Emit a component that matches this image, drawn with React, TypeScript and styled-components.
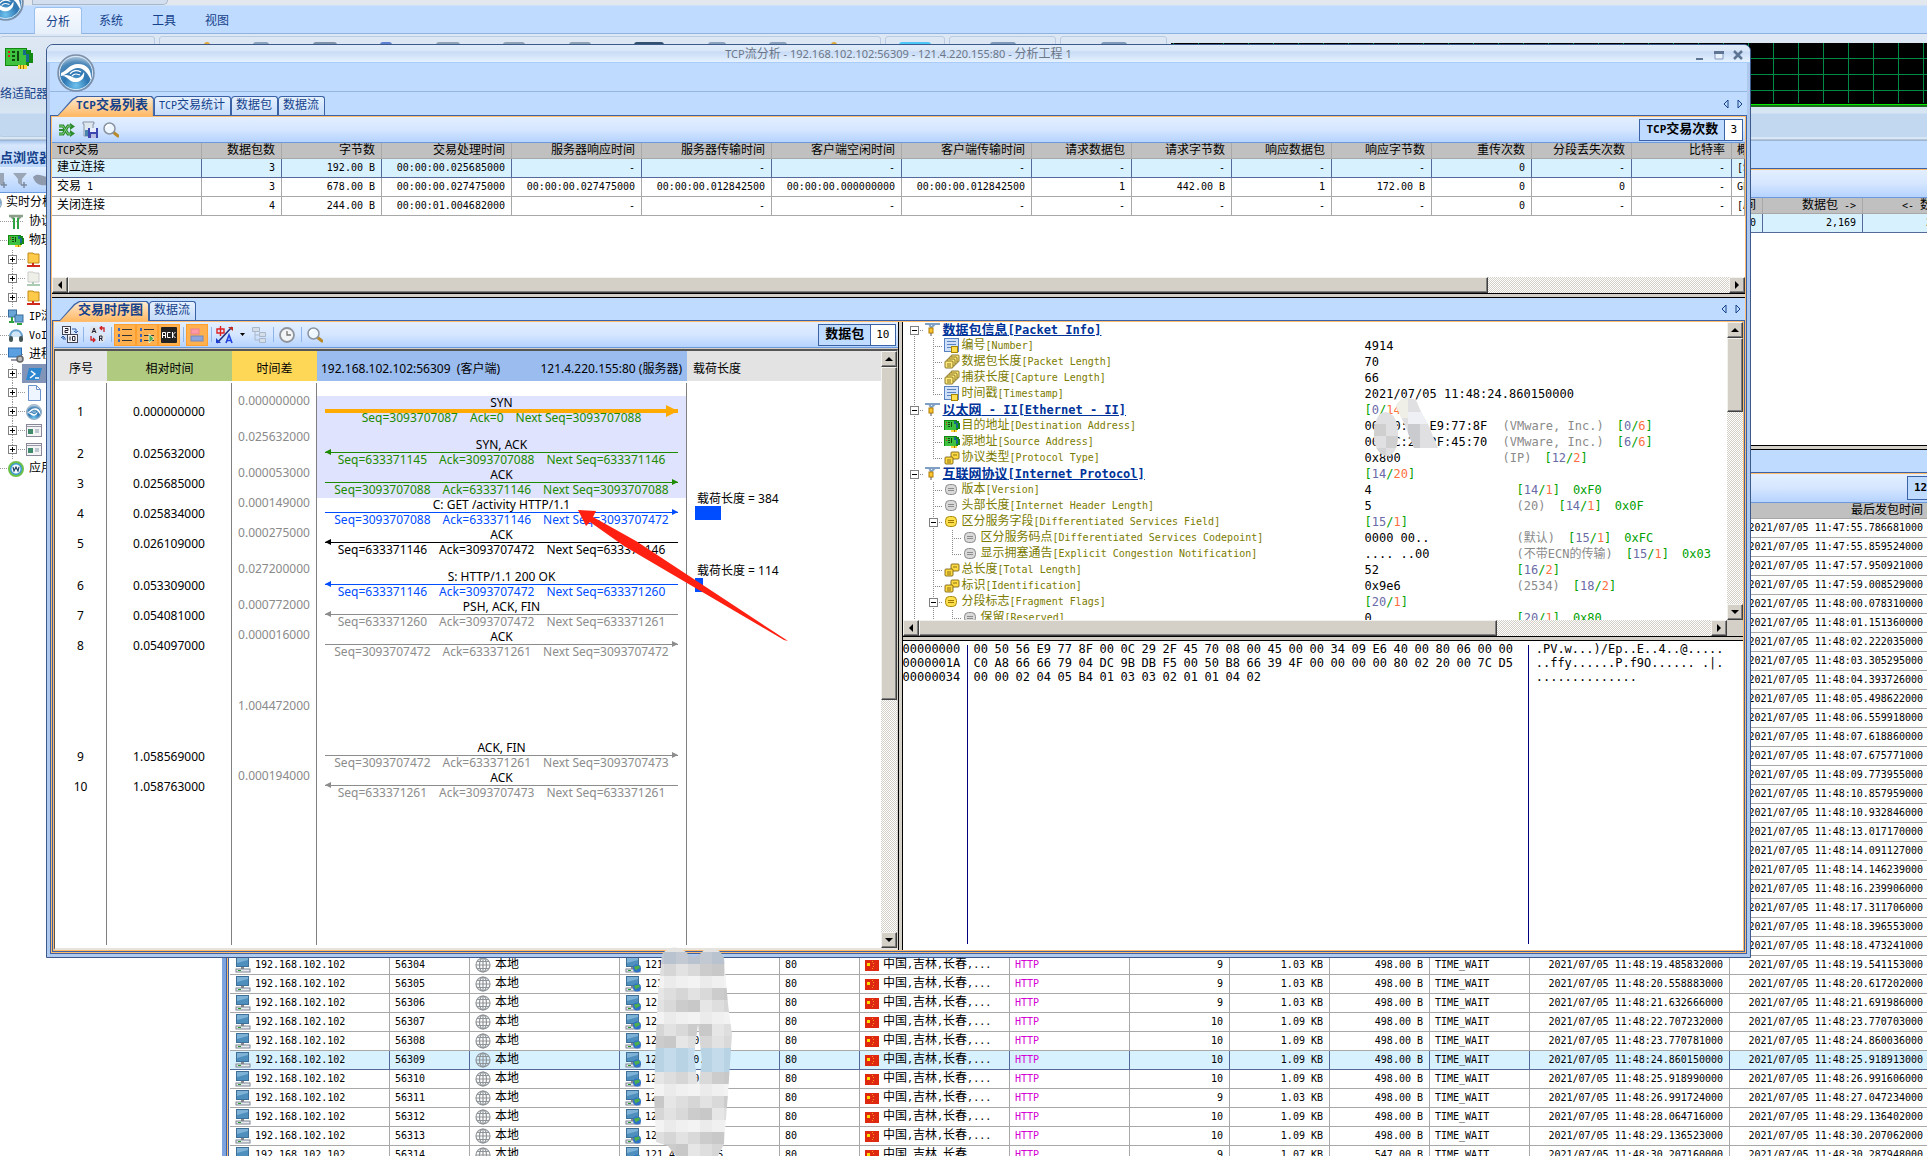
import React from 'react';
import styled, { createGlobalStyle, css } from 'styled-components';

const MONO = '"DejaVu Sans Mono", "Noto Sans CJK SC", monospace';
const SANS = '"Noto Sans", "Noto Sans CJK SC", sans-serif';
const NAVY = '#15428b';
const FRAME = '#3a62a5';
const SKY = '#bfdbff';
const ORANGE = '#ffbb6e';

const Global = createGlobalStyle`
  *, *::before, *::after { box-sizing: border-box; }
  html, body { margin: 0; height: 100%; }
  #root { height: 100%; }
  body { font-family: ${MONO}; font-size: 10px; color: #000; background: #fff; overflow: hidden; }
  button { font: inherit; color: inherit; margin: 0; padding: 0; border: 0; background: none; }
  svg { display: block; flex: none; }
  table { border-collapse: separate; border-spacing: 0; table-layout: fixed; }
`;

/* ---------- text ---------- */

const Han = styled.span<{ $size: number }>`
  font-family: "Noto Sans CJK SC", sans-serif;
  font-size: ${p => p.$size}px;
  line-height: 1;
`;

function Txt({ children, size = 12 }: { children: string; size?: number }) {
  return (
    <>
      {children.split(/([\u2e80-\u9fff]+)/).map((part, i) =>
        i % 2 ? <Han key={i} $size={size}>{part}</Han> : part
      )}
    </>
  );
}

/* ---------- icons ---------- */

const Orb = ({ size }: { size: number }) => (
  <svg width={size} height={size} viewBox="0 0 38 38">
    <defs>
      <radialGradient id="orb" cx="50%" cy="85%" r="85%">
        <stop offset="0" stopColor="#6fc3ee" />
        <stop offset="0.4" stopColor="#2f78b4" />
        <stop offset="0.75" stopColor="#4d88b8" />
        <stop offset="1" stopColor="#c4d6e6" />
      </radialGradient>
    </defs>
    <circle cx="19" cy="19" r="18" fill="url(#orb)" stroke="#7d8ea6" strokeWidth="1.5" />
    <circle cx="19" cy="19" r="16.6" fill="none" stroke="#dbe9f6" strokeWidth="1" />
    <path d="M4 19C10 17 12 10 21 10C30 10 35 16 34 26C31 20 28 15 22 14C15 13 12 20 4 22z" fill="#fff" />
    <path d="M5 22C10 21 12 29 20 28C26 27 28 22 27 18C25 22 22 25 18 24C14 23 12 19 5 22z" fill="#fff" />
    <path d="M13 20c3-4 7-4 11-2M15 22c3-3 5-2 8-1" fill="none" stroke="#fff" strokeWidth="1.2" />
  </svg>
);

const Nic = ({ w = 16 }: { w?: number }) => (
  <svg width={w} height={(w * 3) / 4} viewBox="0 0 28 21" shapeRendering="crispEdges">
    <path d="M0 0h22v2h4v3h2v10h-4v3h-2v3h-8v-3H0z" fill="#128a12" />
    <path d="M1 1h20v16H1z" fill="#3fc23f" />
    <path d="M3 3h2v2H3zM3 7h2v2H3z" fill="#e02020" />
    <path d="M7 3h3v2H7zM7 7h3v2H7zM7 11h3v2H7zM12 3h2v10h-2z" fill="#114a11" />
    <path d="M18 2h3v5h-3zM21 6h3v8h-3z" fill="#176a8a" />
    <path d="M13 17h9v4h-9z" fill="#ffd93b" />
    <path d="M15 17h1v4h-1zM18 17h1v4h-1z" fill="#9a7a00" />
  </svg>
);

const Shuffle = () => (
  <svg width="16" height="14" viewBox="0 0 16 14">
    <path d="M0 3h4l5 8h3M0 11h4l5-8h3" fill="none" stroke="#2d8a2d" strokeWidth="3" />
    <path d="M11 0l5 3.5L11 7zM11 7l5 3.5-5 3.5z" fill="#2d8a2d" />
    <path d="M0 3h4l5 8h3M0 11h4l5-8h3" fill="none" stroke="#7fd07f" strokeWidth="1" />
    <path d="M0 7h5" stroke="#2d8a2d" strokeWidth="2" />
  </svg>
);
const SaveAs = () => (
  <svg width="17" height="17" viewBox="0 0 17 17">
    <path d="M2 1h11v2h-1v12H3V3H2z" fill="#dfe8ef" stroke="#8795a5" />
    <path d="M4 9h5v6H4z" fill="#4784b0" />
    <path d="M7 7h10v10H7z" fill="#3b46b0" />
    <path d="M9 7h6v4H9z" fill="#e8ecff" />
    <path d="M10 13h5v4h-5z" fill="#b8bde0" />
  </svg>
);
const Lens = () => (
  <svg width="16" height="16" viewBox="0 0 16 16">
    <path d="M10 10l5 4" stroke="#b98a2a" strokeWidth="3" strokeLinecap="round" />
    <circle cx="6.5" cy="6.5" r="5.5" fill="#eef7ff" stroke="#8a93a0" strokeWidth="1.5" />
    <path d="M3 6c0-2 2-3 4-3" fill="none" stroke="#fff" strokeWidth="1.5" />
  </svg>
);
const Digits = () => (
  <svg width="17" height="17" viewBox="0 0 17 17">
    <rect x="1.500" y="0.500" width="8" height="8" fill="#f5f7fa" stroke="#445" />
    <path d="M4 2.500h3v2H4v2h3" fill="none" stroke="#223" />
    <rect x="6.500" y="8.500" width="10" height="8" fill="#f5f7fa" stroke="#445" />
    <path d="M9 10.500v4M11.500 10.500h2.500v4h-2.500z" fill="none" stroke="#223" />
    <path d="M11 3h4v3M13 5l2 2 2-2M5 13H2v-3M0 12l2-2 2 2" fill="none" stroke="#2c5ba8" />
  </svg>
);
const SwapAR = () => (
  <svg width="17" height="17" viewBox="0 0 17 17">
    <circle cx="5" cy="4.500" r="4.500" fill="#dfe3ea" />
    <circle cx="12" cy="12" r="4.500" fill="#dfe3ea" />
    <path d="M3 7l2-5 2 5M4 5.500h2M10.500 15v-5h2.500v2.500h-2.500M12 12.500l1.500 2.500" fill="none" stroke="#223" />
    <path d="M11 2h4v4M13 0l-2 2 2 2M6 14H2v-4M4 12l2 2-2 2" fill="none" stroke="#d02020" strokeWidth="1.300" />
  </svg>
);
const Bullets = ({ play }: { play?: boolean }) => (
  <svg width="16" height="16" viewBox="0 0 16 16">
    <path d="M5 2.500h10M5 8.500h10M5 13.500h10" stroke="#333" strokeWidth="1" />
    <path d="M1 1h2v3H1zM1 7h2v3H1zM1 12h2v3H1z" fill="#3f66b8" />
    {play && <path d="M10 7l5 4.500-5 4.500z" fill="#4fb04f" stroke="#fff" strokeWidth="0.700" />}
  </svg>
);
const AckIcon = () => (
  <svg width="16" height="16" viewBox="0 0 16 16">
    <rect width="16" height="16" rx="1" fill="#222" />
    <path d="M1.500 11V5.500h3V11M1.500 8.500h3M9.500 5.500h-3v5h3M11.500 5v6M14.500 5l-3 3 3 3" fill="none" stroke="#fff" />
  </svg>
);
const Blocks = () => (
  <svg width="14" height="14" viewBox="0 0 14 14">
    <rect x="1" y="1" width="8" height="5" fill="#ff9aa5" stroke="#e98090" />
    <rect x="1" y="8" width="12" height="5" fill="#8fa4d8" stroke="#7288c0" />
  </svg>
);
const Language = () => (
  <svg width="18" height="18" viewBox="0 0 18 18">
    <path d="M1 3h7v4H1zM4.500 0v10" fill="none" stroke="#e02020" strokeWidth="1.400" />
    <path d="M1 17L16 1" stroke="#203080" strokeWidth="1.600" />
    <path d="M12 1h5v4z" fill="#c03020" />
    <path d="M0 12v5h5z" fill="#2040d0" />
    <path d="M10 17l3-8 3 8M11 14.500h4" fill="none" stroke="#2040e0" strokeWidth="1.600" />
  </svg>
);
const GreyTree = () => (
  <svg width="15" height="16" viewBox="0 0 15 16">
    <path d="M3 4v9h6M3 8h6" fill="none" stroke="#a9b7c8" />
    <path d="M0.500 0.500h7v4h-7zM7.500 5.500h6v4h-6zM7.500 11.500h6v4h-6z" fill="#d5dde8" stroke="#a9b7c8" />
  </svg>
);
const Clock = () => (
  <svg width="16" height="16" viewBox="0 0 16 16">
    <circle cx="8" cy="8" r="7" fill="#f3f4f6" stroke="#8f949c" strokeWidth="1.800" />
    <path d="M8 4v4h4" fill="none" stroke="#777" strokeWidth="1.300" />
  </svg>
);
const Tri = ({ dir }: { dir: 'u' | 'd' | 'l' | 'r' }) => (
  <svg width="8" height="8" viewBox="0 0 8 8">
    <path d={{ u: 'M0 6h8L4 2z', d: 'M0 2h8L4 6z', l: 'M6 0v8L2 4z', r: 'M2 0v8l4-4z' }[dir]} />
  </svg>
);
const TabArrow = ({ left }: { left?: boolean }) => (
  <svg width="6" height="10" viewBox="0 0 6 10">
    <path d={left ? 'M5 1v8L1 5z' : 'M1 1v8l4-4z'} fill="none" stroke={NAVY} />
  </svg>
);

type Kind = 'pin' | 'note' | 'stack' | 'card' | 'pair' | 'grey' | 'gold';
function PacketIcon({ kind }: { kind: Kind }) {
  if (kind === 'card') return <Nic w={16} />;
  return (
    <svg width="16" height="16" viewBox="0 0 16 16">
      {kind === 'pin' && (
        <>
          <path d="M0 2h15M4 2l3 5M10 2L7 5" stroke="#7f9fc4" strokeWidth="2" fill="none" />
          <rect x="4" y="6" width="4" height="5" fill="#ffc72e" stroke="#b07a00" />
          <path d="M6 11v3" stroke="#555" />
        </>
      )}
      {kind === 'note' && (
        <>
          <rect x="0.500" y="0.500" width="14" height="13" fill="#cfe0fb" stroke="#5a82c0" />
          <path d="M3 3.500h9M3 6.500h9M3 9.500h4" stroke="#5a82c0" />
          <rect x="7.500" y="8.500" width="6" height="6" fill="#ffdf4f" stroke="#a98600" />
        </>
      )}
      {kind === 'stack' && (
        <g fill="#ffe97a" stroke="#7a6a1a" strokeWidth="0.900">
          <rect x="7" y="1" width="8" height="7" rx="1" />
          <rect x="5" y="3" width="8" height="7" rx="1" />
          <rect x="3" y="5" width="8" height="7" rx="1" />
          <rect x="1" y="7" width="8" height="7" rx="1" />
          <path d="M3 10h4M3 12h4" />
        </g>
      )}
      {kind === 'pair' && (
        <g fill="#ffd93f" stroke="#7a6416" strokeWidth="0.900">
          <rect x="7" y="2" width="8" height="7" rx="1" />
          <rect x="1" y="7" width="8" height="7" rx="1" />
          <path d="M9 5h4M3 10h4M3 12h4" />
        </g>
      )}
      {(kind === 'grey' || kind === 'gold') && (
        <>
          <rect x="1.500" y="2.500" width="11" height="10" rx="4" fill={kind === 'grey' ? '#d9d9d9' : '#ffdf4a'} stroke={kind === 'grey' ? '#8c8c8c' : '#a88a10'} />
          <path d="M4 6.500h6M4 8.500h6" stroke={kind === 'grey' ? '#8c8c8c' : '#a07800'} />
        </>
      )}
    </svg>
  );
}

const Pc = ({ globe }: { globe?: boolean }) => (
  <svg width="16" height="16" viewBox="0 0 16 16">
    <rect x="1.500" y="0.500" width="12" height="9" fill="#4f8fbd" stroke="#3d6f98" />
    <path d="M2 6l11-3V1H2z" fill="#7db2d6" />
    <path d="M6 10h3v2H6z" fill="#888" />
    <rect x="1" y="12" width="14" height="3" fill="#e8ecf2" stroke="#7c8490" />
    <path d="M3 13h3v1H3z" fill="#2c9a2c" />
    {globe && (
      <>
        <circle cx="12" cy="11.500" r="4" fill="#2f70c8" />
        <path d="M9 10c2-2 3 0 4-2l2 2c-1 3-3 1-4 4z" fill="#4cae4c" />
      </>
    )}
  </svg>
);
const Globe = () => (
  <svg width="16" height="16" viewBox="0 0 16 16" fill="none" stroke="#8f9498" strokeWidth="1.200">
    <circle cx="8" cy="8" r="7" />
    <ellipse cx="8" cy="8" rx="3.500" ry="7" />
    <path d="M8 1v14M1 8h14M2 4.500h12M2 11.500h12" />
  </svg>
);
const Flag = () => (
  <svg width="14" height="11" viewBox="0 0 14 11">
    <rect width="14" height="11" fill="#de2910" />
    <path d="M2 3h3v3H2z" fill="#ffde00" />
    <path d="M7 1h1v1H7zM8 3h1v1H8zM8 6h1v1H8zM7 8h1v1H7z" fill="#ff9a20" />
  </svg>
);

type Side = 'orb' | 'proto' | 'nic' | 'folder' | 'folderOff' | 'ip' | 'voip' | 'proc' | 'shell' | 'doc' | 'win' | 'web';
function SideIcon({ kind }: { kind: Side }) {
  if (kind === 'orb') return <Orb size={16} />;
  if (kind === 'nic') return <Nic w={16} />;
  return (
    <svg width="16" height="16" viewBox="0 0 16 16">
      {kind === 'proto' && (
        <>
          <path d="M1 2h14M3 2l3 3M13 2l-3 3" stroke="#8aa08a" strokeWidth="2.500" />
          <path d="M5 4h2v11H5zM9 4h2v11H9z" fill="#2fa23f" />
        </>
      )}
      {(kind === 'folder' || kind === 'folderOff') && (
        <g opacity={kind === 'folderOff' ? 0.5 : 1}>
          <path d="M2 1h5l1 1h5v9H2z" fill={kind === 'folder' ? '#ffc94a' : '#dfe0d0'} stroke={kind === 'folder' ? '#c08a1a' : '#999'} />
          <path d="M7 11v3M1 14h13" stroke={kind === 'folder' ? '#d02a1a' : '#5a9a6a'} strokeWidth="2" />
        </g>
      )}
      {kind === 'ip' && (
        <>
          <rect x="0.500" y="1" width="8" height="7" fill="#6aa6d6" stroke="#3b6c9c" />
          <rect x="7" y="6" width="8" height="7" fill="#6aa6d6" stroke="#3b6c9c" />
          <path d="M1 13h5M9 15h5M4 8v5" stroke="#2fa23f" strokeWidth="2" />
        </>
      )}
      {kind === 'voip' && (
        <>
          <path d="M2 9C2 0 14 0 14 9" fill="#cfe6f8" stroke="#68a0cc" strokeWidth="2" />
          <rect x="1" y="8" width="4" height="6" rx="2" fill="#455" />
          <rect x="11" y="8" width="4" height="6" rx="2" fill="#455" />
        </>
      )}
      {kind === 'proc' && (
        <>
          <rect x="0.500" y="1" width="13" height="9" fill="#5aa0e0" stroke="#2f6cb0" />
          <path d="M3 13h8" stroke="#99a" strokeWidth="2" />
          <circle cx="12" cy="12" r="3" fill="#bbb" stroke="#666" strokeWidth="1.500" />
        </>
      )}
      {kind === 'shell' && (
        <>
          <path d="M3 2h13l-3 12H0z" fill="#2d86d0" />
          <path d="M5 5l4 3-5 4M9 12h4" stroke="#fff" strokeWidth="1.400" fill="none" />
        </>
      )}
      {kind === 'doc' && <path d="M2.500 0.500h8l4 4v11h-12zM10.500 0.500v4h4" fill="#eef5ff" stroke="#6d93cc" />}
      {kind === 'win' && (
        <>
          <rect x="0.500" y="1.500" width="15" height="12" fill="#f4f4f4" stroke="#889" />
          <path d="M1 3.500h14" stroke="#99a" />
          <path d="M2 6h5v5H2z" fill="#3f8a6a" />
          <path d="M9 7h4M9 9h4" stroke="#89a" />
        </>
      )}
      {kind === 'web' && (
        <>
          <circle cx="8" cy="8" r="7" fill="#3c9ad8" stroke="#6cc048" strokeWidth="2" />
          <circle cx="8" cy="8" r="4.500" fill="#f4faff" />
          <path d="M5 6l1 4 2-4 2 4 1-4" stroke="#246" strokeWidth="1.200" fill="none" />
        </>
      )}
    </svg>
  );
}

/* ---------- shared parts ---------- */

const Strip = styled.div<{ $h: number }>`
  height: ${p => p.$h}px;
  flex: none;
  display: flex;
  align-items: center;
  padding: 0 2px 0 4px;
  background: linear-gradient(#e3efff, #d5e6ff 50%, #b5d3ff);
  border-bottom: 1px solid #6a9adb;
`;

const Counter = styled.div`
  margin-left: auto;
  height: 22px;
  display: flex;
  flex: none;
  border: 1px solid ${FRAME};
  background: ${SKY};
  font-size: 11px;
  line-height: 20px;
  white-space: nowrap;
  b { padding: 0 6px; }
  output { background: #fff; border-left: 1px solid ${FRAME}; padding: 0 5px; }
`;

const raised = css`
  background: #d4d0c8;
  border: 1px solid;
  border-color: #f4f2ee #404040 #404040 #f4f2ee;
  box-shadow: inset -1px -1px #808080;
`;

const Bar = styled.div<{ $v?: boolean }>`
  flex: none;
  display: flex;
  flex-direction: ${p => (p.$v ? 'column' : 'row')};
  ${p => (p.$v ? 'width: 16px;' : 'height: 16px;')}
  background: repeating-conic-gradient(#fff 0 25%, #d4d0c8 0 50%) 0 0 / 2px 2px;
`;
const BarButton = styled.button`
  ${raised}
  width: 16px;
  height: 16px;
  flex: none;
  display: grid;
  place-items: center;
`;
const BarTrack = styled.div<{ $v?: boolean }>`
  flex: 1;
  display: flex;
  flex-direction: ${p => (p.$v ? 'column' : 'row')};
`;
const Thumb = styled.div<{ $pct: number }>`
  ${raised}
  flex: 0 0 ${p => p.$pct}%;
`;

function ScrollBar({ v, pct }: { v?: boolean; pct: number }) {
  return (
    <Bar $v={v}>
      <BarButton aria-label="back"><Tri dir={v ? 'u' : 'l'} /></BarButton>
      <BarTrack $v={v}><Thumb $pct={pct} /></BarTrack>
      <BarButton aria-label="forward"><Tri dir={v ? 'd' : 'r'} /></BarButton>
    </Bar>
  );
}

const Grid = styled.table<{ $w?: string }>`
  width: ${p => p.$w || '100%'};
  th, td {
    height: 19px;
    padding: 0 6px;
    line-height: 18px;
    white-space: nowrap;
    overflow: hidden;
    text-align: right;
    border-right: 1px solid #a8a8a8;
    border-bottom: 1px solid #a8a8a8;
    font-weight: 400;
  }
  th { height: 16px; line-height: 15px; background: #c0c0c0; }
  .l { text-align: left; padding-left: 5px; }
`;
const Row = styled.tr<{ $on?: boolean }>`
  ${p => p.$on && css`
    background: #d8f1ff;
    && td { border-color: #55699a; }
  `}
`;

const HSplit = styled.div`
  height: 5px;
  flex: none;
  background: #d4d0c8;
  border: solid #000;
  border-width: 1px 0;
`;

/* ---------- main application behind ---------- */

const Desktop = styled.div`
  position: relative;
  height: 100vh;
  overflow: hidden;
  display: flex;
  flex-direction: column;
  background: #fff;
`;
const Caption = styled.header`
  height: 6px;
  flex: none;
  padding-left: 32px;
  background: #e3e8ee;
  border-bottom: 1px solid #cfe1f6;
`;
const QuickAccess = styled.div`
  width: 136px;
  height: 5px;
  background: #d3dfee;
  border: 1px solid #a8b8cc;
  border-top: 0;
  border-radius: 0 0 10px 0;
`;
const AppOrb = styled.div`
  position: absolute;
  left: -13px;
  top: -16px;
`;
const RibbonTabs = styled.nav`
  height: 28px;
  flex: none;
  display: flex;
  padding: 1px 0 0 34px;
  gap: 5px;
  background: ${SKY};
  border-bottom: 1px solid #8db2e3;
`;
const RibbonTab = styled.button<{ $on?: boolean }>`
  width: 48px;
  height: 27px;
  color: ${NAVY};
  ${p => p.$on && css`
    background: linear-gradient(#f8fbff, #e6eff9);
    border: 1px solid #9cc0ee;
    border-bottom: 0;
    border-radius: 3px 3px 0 0;
  `}
`;
const Ribbon = styled.section`
  height: 107px;
  flex: none;
  padding-top: 2px;
  display: flex;
  gap: 4px;
  background: linear-gradient(#dee8f4, #d3e1f0 60%, #d8e6f4 79px, #c1d8f0 80px, #c1d8f0 103px, #eef6fd 104px, #9fb6d0 106px);
`;
const RibbonGroup = styled.div<{ $w?: number }>`
  ${p => (p.$w ? `width: ${p.$w}px; flex: none;` : 'flex: 1;')}
  height: 101px;
  border: 1px solid #b9cbe0;
  border-radius: 3px;
  padding-top: 5px;
  display: flex;
  justify-content: space-evenly;
  overflow: hidden;
  &:first-child { border-left: 0; justify-content: flex-start; }
  &:last-child { border: 0; padding-top: 7px; }
`;
const RibbonHint = styled.i<{ $c: string; $w: number }>`
  width: ${p => p.$w}px;
  height: 10px;
  border-radius: 3px;
  background: ${p => p.$c};
`;
const Adapter = styled.button`
  display: flex;
  flex-direction: column;
  justify-content: flex-start;
  gap: 18px;
  width: 60px;
  height: 66px;
  color: ${NAVY};
  text-align: left;
  white-space: nowrap;
  svg { margin: 6px 0 0 5px; }
`;
const Traffic = styled.svg`
  width: 100%;
  height: 64px;
  background: #000;
`;
const Work = styled.div`
  flex: 1;
  min-height: 0;
  display: flex;
`;
const Sidebar = styled.aside`
  width: 222px;
  flex: none;
  background: #fff;
  overflow: hidden;
`;
const SideTitle = styled.h2`
  margin: 0;
  height: 26px;
  padding-top: 4px;
  line-height: 24px;
  color: ${NAVY};
  background: linear-gradient(#a9c8f2, #d6e6fc 4px, #bcd8fd);
`;
const SideTools = styled.div`
  height: 26px;
  display: flex;
  align-items: center;
  gap: 5px;
  border-bottom: 1px solid #6a9adb;
  background: linear-gradient(#e3efff, #b5d3ff);
`;
const SideTree = styled.ul`
  margin: 0;
  padding: 0;
  list-style: none;
`;
const SideItem = styled.li<{ $root?: boolean; $child?: boolean }>`
  height: 19px;
  display: flex;
  align-items: center;
  gap: ${p => (p.$root ? 4 : 5)}px;
  padding-left: ${p => (p.$root ? 0 : 8)}px;
  line-height: 17px;
  white-space: nowrap;
  ${p => p.$root && '& > svg { margin-left: -14px; }'}
  background: ${p => (p.$root ? 'none' : 'repeating-linear-gradient(90deg, #999 0 1px, transparent 1px 2px) 0 9px / 24px 1px no-repeat')};
  ${p => p.$child && css`
    background: repeating-linear-gradient(90deg, #999 0 1px, transparent 1px 2px) 12px 9px / 14px 1px no-repeat,
      repeating-linear-gradient(#999 0 1px, transparent 1px 2px) 12px 0 / 1px 100% no-repeat;
  `}
`;
const Box = styled.span`
  width: 9px;
  height: 9px;
  flex: none;
  border: 1px solid #808080;
  background: #fff;
  display: grid;
  place-items: center;
`;
const Sign = ({ plus }: { plus?: boolean }) => (
  <svg width="5" height="5" viewBox="0 0 5 5"><path d={plus ? 'M0 2h2V0h1v2h2v1H3v2H2V3H0z' : 'M0 2h5v1H0z'} /></svg>
);
const ShellPick = styled.span<{ $on?: boolean }>`
  display: flex;
  align-items: center;
  padding: 1px 4px;
  height: 19px;
  width: 60px;
  ${p => p.$on && 'background: #8294b8;'}
`;
const Edge = styled.div`
  width: 8px;
  flex: none;
  background: linear-gradient(90deg, #7ea4e0 4px, ${FRAME} 4px 5px, ${ORANGE} 5px 6px, ${FRAME} 6px 7px, #fff 7px);
`;
const Main = styled.main`
  flex: 1;
  min-width: 0;
  display: flex;
  flex-direction: column;
  overflow: hidden;
`;
const Upper = styled.section`
  height: 304px;
  flex: none;
`;
const PlainTabs = styled.div<{ $h: number }>`
  height: ${p => p.$h}px;
  flex: none;
  background: ${SKY};
  border-bottom: 1px solid ${FRAME};
  box-shadow: 0 1px ${ORANGE};
  margin-bottom: 1px;
`;
const Filter = styled.div`
  margin: 0 -2px 0 auto;
  width: 20px;
  height: 24px;
  padding-left: 6px;
  border: 1px solid ${FRAME};
  border-right: 0;
  background: ${SKY};
  font-size: 11px;
  font-weight: 700;
  line-height: 22px;
  overflow: hidden;
`;
const IconText = styled.span`
  display: flex;
  align-items: center;
  gap: 4px;
`;
const Http = styled.span`
  color: #d400d4;
`;

const ribbonTabs = ['分析', '系统', '工具', '视图'];

const sideRows: { k: Side; t?: string; root?: boolean; child?: boolean; on?: boolean }[] = [
  { k: 'orb', t: '实时分析', root: true },
  { k: 'proto', t: '协议' },
  { k: 'nic', t: '物理' },
  { k: 'folder', child: true },
  { k: 'folderOff', child: true },
  { k: 'folder', child: true },
  { k: 'ip', t: 'IP浏览' },
  { k: 'voip', t: 'VoIP' },
  { k: 'proc', t: '进程' },
  { k: 'shell', child: true, on: true },
  { k: 'doc', child: true },
  { k: 'orb', child: true },
  { k: 'win', child: true },
  { k: 'win', child: true },
  { k: 'web', t: '应用' },
];

const lastSeen = [
  '11:47:55.786681000', '11:47:55.859524000', '11:47:57.950921000', '11:47:59.008529000', '11:48:00.078310000',
  '11:48:01.151360000', '11:48:02.222035000', '11:48:03.305295000', '11:48:04.393726000', '11:48:05.498622000',
  '11:48:06.559918000', '11:48:07.618860000', '11:48:07.675771000', '11:48:09.773955000', '11:48:10.857959000',
  '11:48:10.932846000', '11:48:13.017170000', '11:48:14.091127000', '11:48:14.146239000', '11:48:16.239906000',
  '11:48:17.311706000', '11:48:18.396553000', '11:48:18.473241000',
];
const flows: [string, string, string, string, string, string][] = [
  ['56304', '9', '1.03 KB', '498.00 B', '11:48:19.485832000', '11:48:19.541153000'],
  ['56305', '9', '1.03 KB', '498.00 B', '11:48:20.558883000', '11:48:20.617202000'],
  ['56306', '9', '1.03 KB', '498.00 B', '11:48:21.632666000', '11:48:21.691986000'],
  ['56307', '10', '1.09 KB', '498.00 B', '11:48:22.707232000', '11:48:23.770703000'],
  ['56308', '10', '1.09 KB', '498.00 B', '11:48:23.770781000', '11:48:24.860036000'],
  ['56309', '10', '1.09 KB', '498.00 B', '11:48:24.860150000', '11:48:25.918913000'],
  ['56310', '10', '1.09 KB', '498.00 B', '11:48:25.918990000', '11:48:26.991606000'],
  ['56311', '9', '1.03 KB', '498.00 B', '11:48:26.991724000', '11:48:27.047234000'],
  ['56312', '10', '1.09 KB', '498.00 B', '11:48:28.064716000', '11:48:29.136402000'],
  ['56313', '10', '1.09 KB', '498.00 B', '11:48:29.136523000', '11:48:30.207062000'],
  ['56314', '9', '1.07 KB', '547.00 B', '11:48:30.207160000', '11:48:30.287948000'],
];
const flowCols = [160, 80, 150, 160, 80, 150, 120, 100, 100, 100, 100, 200, 200];

function Background() {
  return (
    <>
      <Caption><QuickAccess /></Caption>
      <RibbonTabs>
        {ribbonTabs.map((t, i) => <RibbonTab key={t} $on={i === 0}><Txt>{t}</Txt></RibbonTab>)}
      </RibbonTabs>
      <Ribbon>
        <RibbonGroup $w={155}>
          <Adapter><Nic w={28} /><span><Txt>络适配器</Txt></span></Adapter>
        </RibbonGroup>
        <RibbonGroup $w={722}>
          <RibbonHint $w={6} $c="#e0a93a" />
          <RibbonHint $w={16} $c="#8da2bd" />
          <RibbonHint $w={24} $c="#7f93a8" />
          <RibbonHint $w={12} $c="#5d7fd0" />
          <RibbonHint $w={24} $c="#8fa3b5" />
          <RibbonHint $w={22} $c="#8fa3b5" />
          <RibbonHint $w={22} $c="#8fa3b5" />
          <RibbonHint $w={30} $c="#33506f" />
          <RibbonHint $w={18} $c="#8da2bd" />
          <RibbonHint $w={18} $c="#8da2bd" />
          <RibbonHint $w={6} $c="#e0a93a" />
        </RibbonGroup>
        <RibbonGroup $w={60}><RibbonHint $w={32} $c="#4cc8f8" /></RibbonGroup>
        <RibbonGroup $w={107}><RibbonHint $w={26} $c="#7f9ab8" /></RibbonGroup>
        <RibbonGroup $w={107}><RibbonHint $w={26} $c="#7f9ab8" /></RibbonGroup>
        <RibbonGroup>
          <Traffic>
            <defs>
              <pattern id="cells" width="25" height="16" patternUnits="userSpaceOnUse" x="2">
                <path d="M0.500 0v16M0 15.500h25" stroke="#008a45" fill="none" />
              </pattern>
            </defs>
            <rect width="100%" height="60" fill="url(#cells)" />
            <rect y="62" width="100%" height="2" fill="#1d6b1d" />
            <rect y="61" width="100%" height="1" fill="#00f000" />
          </Traffic>
        </RibbonGroup>
      </Ribbon>
      <Work>
        <Sidebar>
          <SideTitle><Txt size={13}>点浏览器</Txt></SideTitle>
          <SideTools>
            <svg width="48" height="18" viewBox="0 0 48 18">
              <path d="M0 2h4v12H0zM13 2h14l-5 6v7l-4-3V8z" fill="#9aa6b6" />
              <path d="M4 11v6M1 14h6M24 11v6M21 14h6" stroke="#7c8aa0" strokeWidth="1.500" />
              <path d="M33 6c4-4 7-2 14 0v8c-7 1-12-1-14-8z" fill="#8f9bac" />
            </svg>
          </SideTools>
          <SideTree>
            {sideRows.map((r, i) => (
              <SideItem key={i} $root={r.root} $child={r.child}>
                {r.child ? (
                  <>
                    <Box><Sign plus /></Box>
                    <ShellPick $on={r.on}><SideIcon kind={r.k} /></ShellPick>
                  </>
                ) : (
                  <SideIcon kind={r.k} />
                )}
                {r.t && <span><Txt>{r.t}</Txt></span>}
              </SideItem>
            ))}
          </SideTree>
        </Sidebar>
        <Edge />
        <Main>
          <Upper>
            <PlainTabs $h={28} />
            <Strip $h={28} />
            <Grid $w="1733px">
              <colgroup><col width={1533} /><col width={100} /><col width={100} /></colgroup>
              <thead><tr><th><Txt>间</Txt></th><th><Txt>{'数据包 ->'}</Txt></th><th><Txt>{'<- 数据包'}</Txt></th></tr></thead>
              <tbody><Row $on><td>0</td><td>2,169</td><td>2,030</td></Row></tbody>
            </Grid>
          </Upper>
          <HSplit />
          <PlainTabs $h={23} />
          <Strip $h={29}><Filter>12</Filter></Strip>
          <Grid $w="1700px">
            <colgroup>{flowCols.map((w, i) => <col key={i} width={w} />)}</colgroup>
            <thead><tr>{flowCols.map((_, i) => <th key={i}>{i === 12 && <Txt>最后发包时间</Txt>}</th>)}</tr></thead>
            <tbody>
              {lastSeen.map(t => (
                <Row key={t}><td colSpan={12} /><td>2021/07/05 {t}</td></Row>
              ))}
              {flows.map(f => (
                <Row key={f[0]} $on={f[0] === '56309'}>
                  <td className="l"><IconText><Pc />192.168.102.102</IconText></td>
                  <td className="l">{f[0]}</td>
                  <td className="l"><IconText><Globe /><span><Txt>本地</Txt></span></IconText></td>
                  <td className="l"><IconText><Pc globe />121.4.220.155</IconText></td>
                  <td className="l">80</td>
                  <td className="l"><IconText><Flag /><span><Txt>中国,吉林,长春,...</Txt></span></IconText></td>
                  <td className="l"><Http>HTTP</Http></td>
                  <td>{f[1]}</td><td>{f[2]}</td><td>{f[3]}</td>
                  <td className="l">TIME_WAIT</td>
                  <td>2021/07/05 {f[4]}</td>
                  <td>2021/07/05 {f[5]}</td>
                </Row>
              ))}
            </tbody>
          </Grid>
        </Main>
      </Work>
      <AppOrb><Orb size={37} /></AppOrb>
    </>
  );
}

/* ---------- TCP flow window ---------- */

const Window = styled.section`
  position: absolute;
  left: 46px;
  right: 176px;
  top: 44px;
  bottom: 198px;
  display: flex;
  flex-direction: column;
  border: 1px solid #3c5a8c;
  border-radius: 7px 7px 0 0;
  background: #afc9ee;
  overflow: hidden;
`;
const TitleBar = styled.header`
  height: 18px;
  flex: none;
  display: flex;
  align-items: flex-end;
  padding: 0 3px 0 60px;
  background: linear-gradient(#e1ecf9, #d8e6f7 35%, #c8dbf5 40%, #e6f2ff);
  border-bottom: 1px solid #a9ccf8;
  h1 {
    flex: 1;
    margin: 0;
    text-align: center;
    font: 400 11px/16px ${SANS};
    color: #6b7688;
  }
`;
const WinButton = styled.button`
  width: 19px;
  height: 14px;
  display: grid;
  place-items: center;
`;
const WinOrb = styled.div`
  position: absolute;
  left: 10px;
  top: 9px;
`;
const Frame = styled.div`
  flex: 1;
  min-height: 0;
  display: flex;
  flex-direction: column;
  padding: 0 3px 3px;
`;
const MenuBand = styled.div`
  height: 29px;
  flex: none;
  background: ${SKY};
  border-bottom: 1px solid #95b5e2;
`;
const Tabs = styled.div<{ $h: number }>`
  height: ${p => p.$h}px;
  flex: none;
  display: flex;
  align-items: flex-end;
  padding: 0 4px 0 7px;
  background: ${SKY};
  border-bottom: 1px solid ${FRAME};
`;
const Tab = styled.button`
  height: 19px;
  padding: 0 5px 0 4px;
  color: ${NAVY};
  line-height: 18px;
  background: linear-gradient(#e6f1ff, #c4dcfb);
  border: 1px solid ${FRAME};
  border-bottom: 0;
  border-radius: 4px 3px 0 0;
`;
const ActiveTab = styled(Tab)`
  position: relative;
  isolation: isolate;
  padding: 0 6px 0 19px;
  font-size: 11px;
  font-weight: 700;
  border: 0;
  background: none;
  margin-bottom: -1px;
  height: 20px;
  &::before, &::after {
    content: "";
    position: absolute;
    z-index: -1;
    inset: 0;
    background: ${FRAME};
    clip-path: polygon(0 100%, 15px 3px, 20px 0, calc(100% - 2px) 0, 100% 2px, 100% 100%);
  }
  &::after {
    inset: 1px 1px 0 1px;
    background: linear-gradient(#ffe9cf, #ffb964);
  }
`;
const TabArrows = styled.div`
  margin: 0 0 6px auto;
  display: flex;
  gap: 8px;
`;
const Outlined = styled.div`
  flex: 1;
  min-height: 0;
  display: flex;
  flex-direction: column;
  border: 1px solid ${ORANGE};
  outline: 1px solid ${FRAME};
  margin: 0 1px 1px;
`;
const ToolButton = styled.button<{ $on?: boolean; $w?: number }>`
  width: ${p => p.$w || 22}px;
  height: 22px;
  flex: none;
  display: grid;
  place-items: center;
  ${p => p.$on && 'background: #ffb04f; border: 1px solid #ff9f2e;'}
`;
const Sep = styled.i`
  width: 1px;
  height: 15px;
  flex: none;
  margin: 0 2px 0 3px;
  background: #8fb4e8;
`;
const ListPane = styled.div`
  height: 134px;
  flex: none;
  overflow: hidden;
  background: #fff;
`;
const Lower = styled.div`
  flex: 1;
  min-height: 0;
  display: flex;
  background: #d4d0c8;
`;
const LeftPane = styled.div`
  flex: 0 0 50%;
  min-width: 0;
  display: flex;
  flex-direction: column;
  border-right: 1px solid #000;
`;
const VGap = styled.div`
  width: 3px;
  flex: none;
`;
const RightPane = styled.div`
  flex: 1;
  min-width: 0;
  display: flex;
  flex-direction: column;
  border-left: 1px solid #000;
`;
const SeqArea = styled.div`
  flex: 1;
  min-height: 0;
  display: flex;
  background: #fff;
  border: solid #555;
  border-width: 2px 1px 2px 1px;
  border-right-color: #d4d0c8;
  border-bottom-color: #e8e4dc;
  margin-top: 1px;
`;
const SeqChart = styled.div`
  flex: 1;
  min-width: 0;
  display: flex;
  flex-direction: column;
  font: 12px/16px ${SANS};
`;
const cols = 'grid-template-columns: 52px 125px 85px 370px 1fr;';
const SeqHead = styled.div`
  display: grid;
  ${cols}
  height: 30px;
  flex: none;
  line-height: 36px;
  text-align: center;
  margin-bottom: 2px;
  & > div { overflow: hidden; white-space: nowrap; }
`;
const HeadCell = styled.div<{ $c: string; $ends?: boolean }>`
  background: ${p => p.$c};
  ${p => p.$ends && 'display: flex; justify-content: space-between; padding: 0 5px 0 4px;'}
  &:last-child { text-align: left; padding-left: 6px; }
`;
const SeqRow = styled.div<{ $h?: number }>`
  display: grid;
  ${cols}
  ${p => (p.$h ? `height: ${p.$h}px;` : 'flex: 1; margin-bottom: 3px;')}
  & > div { border-right: 1px solid #808080; min-height: 0; }
  & > div:last-child { border-right: 0; }
`;
const StampCell = styled.div`
  display: flex;
  align-items: flex-end;
  justify-content: center;
  padding-bottom: 6px;
`;
const DeltaCell = styled.div`
  display: flex;
  align-items: center;
  justify-content: center;
  padding-bottom: 20px;
  line-height: 10px;
  color: #8a8a8a;
`;
const MsgCell = styled.div<{ $shade?: boolean }>`
  display: flex;
  flex-direction: column;
  justify-content: flex-end;
  padding: 0 8px 1px;
  text-align: center;
  line-height: 14px;
  white-space: nowrap;
  ${p => p.$shade && 'background: #dfe3fd;'}
`;
const Arrow = styled.div<{ $c: string; $left?: boolean; $thick?: boolean }>`
  position: relative;
  height: 1px;
  flex: none;
  background: ${p => p.$c};
  ${p => p.$thick && `box-shadow: 0 2px ${p.$c}, 0 1px ${p.$c}, 0 -1px ${p.$c};`}
  &::after {
    content: "";
    position: absolute;
    top: ${p => (p.$thick ? -5 : -3)}px;
    ${p => (p.$left ? 'left: 0;' : 'right: 0;')}
    border: solid transparent;
    border-width: ${p => (p.$thick ? '6px 0' : '3px 0')};
    ${p => (p.$left ? `border-right: 6px solid ${p.$c};` : `border-left: ${p.$thick ? 12 : 6}px solid ${p.$c};`)}
  }
`;
const Seq = styled.span<{ $c: string }>`
  display: flex;
  justify-content: center;
  gap: 12px;
  color: ${p => p.$c};
`;
const LoadCell = styled.div`
  display: flex;
  flex-direction: column;
  justify-content: flex-end;
  padding: 0 0 8px 8px;
  line-height: 14px;
  & > span { padding-left: 2px; }
`;
const LoadBar = styled.i<{ $w: number }>`
  width: ${p => p.$w}px;
  height: 14px;
  flex: none;
  background: #004dff;
`;

const GREEN = '#1d8a00';
const BLUE = '#004dff';
const GREY = '#8c8c8c';
type Step = [number, string, string, string, string, string, boolean, number?];
const steps: Step[] = [
  [30, '0.000000000', '0.000000000', 'SYN', 'Seq=3093707087  Ack=0  Next Seq=3093707088', GREEN, false],
  [42, '0.025632000', '0.025632000', 'SYN, ACK', 'Seq=633371145  Ack=3093707088  Next Seq=633371146', GREEN, true],
  [30, '0.025685000', '0.000053000', 'ACK', 'Seq=3093707088  Ack=633371146  Next Seq=3093707088', GREEN, false],
  [30, '0.025834000', '0.000149000', 'C: GET /activity HTTP/1.1', 'Seq=3093707088  Ack=633371146  Next Seq=3093707472', BLUE, false, 384],
  [30, '0.026109000', '0.000275000', 'ACK', 'Seq=633371146  Ack=3093707472  Next Seq=633371146', '#000', true],
  [42, '0.053309000', '0.027200000', 'S: HTTP/1.1 200 OK', 'Seq=633371146  Ack=3093707472  Next Seq=633371260', BLUE, true, 114],
  [30, '0.054081000', '0.000772000', 'PSH, ACK, FIN', 'Seq=633371260  Ack=3093707472  Next Seq=633371261', GREY, true],
  [30, '0.054097000', '0.000016000', 'ACK', 'Seq=3093707472  Ack=633371261  Next Seq=3093707472', GREY, false],
  [111, '1.058569000', '1.004472000', 'ACK, FIN', 'Seq=3093707472  Ack=633371261  Next Seq=3093707473', GREY, false],
  [30, '1.058763000', '0.000194000', 'ACK', 'Seq=633371261  Ack=3093707473  Next Seq=633371261', GREY, true],
];

const DecodeBox = styled.div`
  height: 314px;
  flex: none;
  display: flex;
  flex-direction: column;
  background: #fff;
`;
const DecodeBody = styled.div`
  flex: 1;
  min-height: 0;
  display: flex;
`;
const DecodeTree = styled.ul`
  flex: 1;
  margin: 0;
  padding: 0 0 0 2px;
  list-style: none;
  overflow: hidden;
`;
const Node = styled.li`
  height: 16px;
  display: flex;
  line-height: 16px;
  white-space: nowrap;
`;
const NodeName = styled.div<{ $head?: boolean }>`
  width: 460px;
  flex: none;
  display: flex;
  color: #7b7b00;
  ${p => p.$head && `
    & > span { color: #003399; font-weight: 700; font-size: 12px; text-decoration: underline; }
  `}
`;
const Guide = styled.i<{ $link?: boolean; $top?: boolean; $end?: boolean }>`
  width: 19px;
  flex: none;
  display: grid;
  place-items: center;
  background:
    repeating-linear-gradient(#8a8a8a 0 1px, transparent 1px 2px) 9px ${p => (p.$top ? 8 : 0)}px / 1px ${p => (p.$end ? 8 : 16)}px no-repeat,
    repeating-linear-gradient(90deg, #8a8a8a 0 1px, transparent 1px 2px) 9px 8px / ${p => (p.$link ? 10 : 0)}px 1px no-repeat;
`;
const NodeIcon = styled.i`
  width: 19px;
  flex: none;
  display: flex;
  align-items: center;
  padding-left: 1px;
`;
const Value = styled.span<{ $w?: number }>`
  font-size: 12px;
  flex: none;
  ${p => p.$w && `width: ${p.$w}px;`}
`;
const Meta = styled.span`
  font-size: 12px;
  display: flex;
  gap: 13px;
  color: #8a8a8a;
`;
const Pos = styled.span`
  font-size: 12px;
  color: #00a000;
  b { font-weight: 400; color: #6a6aa6; }
  em { font-style: normal; color: #ff7040; }
`;
const Mask = styled.span`
  color: #00a000;
`;
const Hex = styled.div`
  flex: 1;
  min-height: 0;
  display: flex;
  padding-bottom: 4px;
  background: #fff;
  border-bottom: 2px solid #fff;
  font-size: 12px;
  line-height: 14px;
`;
const HexCol = styled.div<{ $w?: number }>`
  ${p => (p.$w ? `width: ${p.$w}px; flex: none;` : 'flex: 1;')}
  white-space: pre;
  padding-top: 1px;
`;
const HexBytes = styled.div`
  width: 562px;
  flex: none;
  margin-top: 4px;
  padding-left: 6px;
  border: solid #000080;
  border-width: 0 1px;
`;
const HexLine = styled.div`
  display: grid;
  grid-template-columns: repeat(26, 21px);
  &:first-child { margin-top: -3px; }
`;

interface N { d: number; icon: Kind; name: string; box?: boolean; last?: boolean; v?: string; w?: number; note?: string; pos?: [string, string]; mask?: string }
const nodes: N[] = [
  { d: 0, icon: 'pin', name: '数据包信息[Packet Info]', box: true },
  { d: 1, icon: 'note', name: '编号[Number]', v: '4914' },
  { d: 1, icon: 'stack', name: '数据包长度[Packet Length]', v: '70' },
  { d: 1, icon: 'stack', name: '捕获长度[Capture Length]', v: '66' },
  { d: 1, icon: 'note', name: '时间戳[Timestamp]', last: true, v: '2021/07/05 11:48:24.860150000' },
  { d: 0, icon: 'pin', name: '以太网 - II[Ethernet - II]', box: true, pos: ['0', '14'] },
  { d: 1, icon: 'card', name: '目的地址[Destination Address]', v: '00:50:56:E9:77:8F', w: 138, note: '(VMware, Inc.)', pos: ['0', '6'] },
  { d: 1, icon: 'card', name: '源地址[Source Address]', v: '00:0C:29:2F:45:70', w: 138, note: '(VMware, Inc.)', pos: ['6', '6'] },
  { d: 1, icon: 'pair', name: '协议类型[Protocol Type]', last: true, v: '0x800', w: 138, note: '(IP)', pos: ['12', '2'] },
  { d: 0, icon: 'pin', name: '互联网协议[Internet Protocol]', box: true, pos: ['14', '20'] },
  { d: 1, icon: 'grey', name: '版本[Version]', v: '4', w: 152, pos: ['14', '1'], mask: '0xF0' },
  { d: 1, icon: 'grey', name: '头部长度[Internet Header Length]', v: '5', w: 152, note: '(20)', pos: ['14', '1'], mask: '0x0F' },
  { d: 1, icon: 'gold', name: '区分服务字段[Differentiated Services Field]', box: true, pos: ['15', '1'] },
  { d: 2, icon: 'grey', name: '区分服务码点[Differentiated Services Codepoint]', v: '0000 00..', w: 152, note: '(默认)', pos: ['15', '1'], mask: '0xFC' },
  { d: 2, icon: 'grey', name: '显示拥塞通告[Explicit Congestion Notification]', last: true, v: '.... ..00', w: 152, note: '(不带ECN的传输)', pos: ['15', '1'], mask: '0x03' },
  { d: 1, icon: 'pair', name: '总长度[Total Length]', v: '52', w: 152, pos: ['16', '2'] },
  { d: 1, icon: 'pair', name: '标识[Identification]', v: '0x9e6', w: 152, note: '(2534)', pos: ['18', '2'] },
  { d: 1, icon: 'gold', name: '分段标志[Fragment Flags]', box: true, pos: ['20', '1'] },
  { d: 2, icon: 'grey', name: '保留[Reserved]', v: '0', w: 152, pos: ['20', '1'], mask: '0x80' },
];

const hex = [
  '00 50 56 E9 77 8F 00 0C 29 2F 45 70 08 00 45 00 00 34 09 E6 40 00 80 06 00 00',
  'C0 A8 66 66 79 04 DC 9B DB F5 00 50 B8 66 39 4F 00 00 00 00 80 02 20 00 7C D5',
  '00 00 02 04 05 B4 01 03 03 02 01 01 04 02',
];

const listCols = [150, 80, 100, 130, 130, 130, 130, 130, 100, 100, 100, 100, 100, 100, 100];
const listHead = ['TCP交易', '数据包数', '字节数', '交易处理时间', '服务器响应时间', '服务器传输时间', '客户端空闲时间', '客户端传输时间', '请求数据包', '请求字节数', '响应数据包', '响应字节数', '重传次数', '分段丢失次数', '比特率', '概'];
const listRows = [
  ['建立连接', '3', '192.00 B', '00:00:00.025685000', '-', '-', '-', '-', '-', '-', '-', '-', '0', '-', '-', '[S'],
  ['交易 1', '3', '678.00 B', '00:00:00.027475000', '00:00:00.027475000', '00:00:00.012842500', '00:00:00.000000000', '00:00:00.012842500', '1', '442.00 B', '1', '172.00 B', '0', '0', '-', 'GE'],
  ['关闭连接', '4', '244.00 B', '00:00:01.004682000', '-', '-', '-', '-', '-', '-', '-', '-', '0', '-', '-', '[A'],
];

function PosTag({ p }: { p: [string, string] }) {
  return <Pos>[<b>{p[0]}</b>/<em>{p[1]}</em>]</Pos>;
}

function Sequence() {
  return (
    <SeqArea>
      <SeqChart>
        <SeqHead>
          <HeadCell $c="#e6e6e6">序号</HeadCell>
          <HeadCell $c="#b0cb80">相对时间</HeadCell>
          <HeadCell $c="#ffd757">时间差</HeadCell>
          <HeadCell $c="#9bbcee" $ends><span>192.168.102.102:56309&nbsp; (客户端)</span><span>121.4.220.155:80 (服务器)</span></HeadCell>
          <HeadCell $c="#e3e3e3">载荷长度</HeadCell>
        </SeqHead>
        <SeqRow $h={13}><div /><div /><div /><div /><div /></SeqRow>
        {steps.map(([h, t, dt, label, seq, c, left, load], i) => (
          <SeqRow key={i} $h={h}>
            <StampCell>{i + 1}</StampCell>
            <StampCell>{t}</StampCell>
            <DeltaCell>{dt}</DeltaCell>
            <MsgCell $shade={i < 3}>
              <span>{label}</span>
              <Arrow $c={i === 0 ? '#ffaa00' : c} $left={left} $thick={i === 0} />
              <Seq $c={c}>{seq.split('  ').map(s => <span key={s}>{s}</span>)}</Seq>
            </MsgCell>
            <LoadCell>
              {load && <><span>载荷长度 = {load}</span><LoadBar $w={Math.round(load / 15)} /></>}
            </LoadCell>
          </SeqRow>
        ))}
        <SeqRow><div /><div /><div /><div /><div /></SeqRow>
      </SeqChart>
      <ScrollBar v pct={59} />
    </SeqArea>
  );
}

const HScrollRow = styled.div`
  flex: none;
  padding-right: 16px;
  background: #d4d0c8;
`;

function Decode() {
  return (
    <DecodeBox>
      <DecodeBody>
        <DecodeTree>
          {nodes.map((n, i) => (
            <Node key={i}>
              <NodeName $head={n.d === 0}>
                {n.d > 0 && <Guide />}
                {n.d > 1 && <Guide />}
                <Guide $link $top={i === 0} $end={n.last}>{n.box && <Box><Sign /></Box>}</Guide>
                <NodeIcon><PacketIcon kind={n.icon} /></NodeIcon>
                <span><Txt size={n.d === 0 ? 13 : 12}>{n.name}</Txt></span>
              </NodeName>
              {n.v && <Value $w={n.w}>{n.v}</Value>}
              <Meta>
                {n.note && <span>{n.note}</span>}
                {n.pos && <PosTag p={n.pos} />}
                {n.mask && <Mask>{n.mask}</Mask>}
              </Meta>
            </Node>
          ))}
        </DecodeTree>
        <ScrollBar v pct={28} />
      </DecodeBody>
      <HScrollRow><ScrollBar pct={73} /></HScrollRow>
    </DecodeBox>
  );
}

function FlowWindow() {
  return (
    <Window>
      <TitleBar>
        <h1><Txt>TCP流分析 - 192.168.102.102:56309 - 121.4.220.155:80 - 分析工程 1</Txt></h1>
        <WinButton aria-label="minimize"><svg width="9" height="10"><path d="M1 8h7v2H1z" fill="#5f7594" /></svg></WinButton>
        <WinButton aria-label="maximize"><svg width="10" height="10"><path d="M1 2h8v7H1z" fill="#e9f1fb" stroke="#8198bd" /><path d="M0 1h10v3H0z" fill="#5f7594" /></svg></WinButton>
        <WinButton aria-label="close"><svg width="10" height="10"><path d="M1 1l8 8M9 1L1 9" stroke="#5f7594" strokeWidth="2.500" /></svg></WinButton>
      </TitleBar>
      <Frame>
        <MenuBand />
        <Tabs $h={24}>
          <ActiveTab><Txt size={13}>TCP交易列表</Txt></ActiveTab>
          <Tab><Txt>TCP交易统计</Txt></Tab>
          <Tab><Txt>数据包</Txt></Tab>
          <Tab><Txt>数据流</Txt></Tab>
          <TabArrows><TabArrow left /><TabArrow /></TabArrows>
        </Tabs>
        <Outlined>
          <Strip $h={26}>
            <ToolButton><Shuffle /></ToolButton>
            <ToolButton><SaveAs /></ToolButton>
            <ToolButton><Lens /></ToolButton>
            <Counter><b><Txt size={13}>TCP交易次数</Txt></b><output>3</output></Counter>
          </Strip>
          <ListPane>
            <Grid>
              <colgroup>{listCols.map((w, i) => <col key={i} width={w} />)}<col /></colgroup>
              <thead>
                <tr>{listHead.map((h, i) => <th key={h} className={i === 0 || i === 15 ? 'l' : ''}><Txt>{h}</Txt></th>)}</tr>
              </thead>
              <tbody>
                {listRows.map((r, y) => (
                  <Row key={y} $on={y === 0}>
                    {r.map((c, i) => <td key={i} className={i === 0 || i === 15 ? 'l' : ''}><Txt>{c}</Txt></td>)}
                  </Row>
                ))}
              </tbody>
            </Grid>
          </ListPane>
          <ScrollBar pct={85.5} />
          <HSplit />
          <Tabs $h={23}>
            <ActiveTab><Txt size={13}>交易时序图</Txt></ActiveTab>
            <Tab><Txt>数据流</Txt></Tab>
            <TabArrows><TabArrow left /><TabArrow /></TabArrows>
          </Tabs>
          <Outlined>
            <Lower>
              <LeftPane>
                <Strip $h={26}>
                  <ToolButton><Digits /></ToolButton>
                  <Sep />
                  <ToolButton><SwapAR /></ToolButton>
                  <Sep />
                  <ToolButton $on><Bullets /></ToolButton>
                  <ToolButton $on><Bullets play /></ToolButton>
                  <ToolButton $on><AckIcon /></ToolButton>
                  <Sep />
                  <ToolButton $on><Blocks /></ToolButton>
                  <Sep />
                  <ToolButton><Language /></ToolButton>
                  <ToolButton $w={12}><svg width="5" height="3"><path d="M0 0h5L2.500 3z" /></svg></ToolButton>
                  <ToolButton><GreyTree /></ToolButton>
                  <Sep />
                  <ToolButton><Clock /></ToolButton>
                  <Sep />
                  <ToolButton><Lens /></ToolButton>
                  <Counter><b><Txt size={13}>数据包</Txt></b><output>10</output></Counter>
                </Strip>
                <Sequence />
              </LeftPane>
              <VGap />
              <RightPane>
                <Decode />
                <HSplit />
                <Hex>
                  <HexCol $w={64}>{'00000000\n0000001A\n00000034'}</HexCol>
                  <HexBytes>
                    {hex.map((l, i) => <HexLine key={i}>{l.split(' ').map((b, j) => <span key={j}>{b}</span>)}</HexLine>)}
                  </HexBytes>
                  <HexCol>{' .PV.w...)/Ep..E..4..@.....\n ..ffy......P.f9O...... .|.\n ..............'}</HexCol>
                </Hex>
              </RightPane>
            </Lower>
          </Outlined>
        </Outlined>
      </Frame>
      <WinOrb><Orb size={38} /></WinOrb>
    </Window>
  );
}

/* ---------- annotations drawn over the screen ---------- */

const Overlay = styled.svg<{ $x: number; $y: number }>`
  position: absolute;
  left: ${p => p.$x}px;
  top: ${p => p.$y}px;
  pointer-events: none;
`;

const tones = ['#d6d6d6', '#e6e6e6', '#cccccc', '#e2e2e2', '#dedede', '#c8c8c8', '#d9d9d9'];
function Mosaic() {
  const cells = [];
  for (let r = 0; r < 18; r++) {
    for (let c = 0; c < 7; c++) {
      const light = r % 3 === 0;
      let fill = light ? ['#f3f3f3', '#ebebeb', '#f0f0f0'][(c + r) % 3] : tones[(c * 3 + r * 2) % 7];
      if (r === 0) fill = '#e4e3e2';
      if (r === 1) fill = c % 2 ? '#b9c2cf' : '#c3c9d3';
      if (r === 9 || r === 10) fill = c % 2 ? '#c3dbea' : '#b8d3e4';
      cells.push(<rect key={`${r}-${c}`} x={c * 12} y={r * 12 - 4} width="12" height="12" fill={fill} />);
    }
  }
  return (
    <Overlay $x={652} $y={944} width="84" height="212" viewBox="0 0 84 212" shapeRendering="crispEdges">
      <clipPath id="smear">
        <path d="M10 10Q20-2 34 8Q42 18 52 6Q66 0 72 14L76 60L80 90L76 150L72 200L66 212H24L16 202L4 198L2 150L4 90L6 50z M46 80L42 112L46 142L50 118z" clipRule="evenodd" />
      </clipPath>
      <g clipPath="url(#smear)">{cells}</g>
    </Overlay>
  );
}

function App() {
  return (
    <Desktop>
      <Global />
      <Background />
      <FlowWindow />
      <Overlay $x={1370} $y={394} width="72" height="72" viewBox="0 0 72 72">
        <clipPath id="patch"><path d="M4 42Q4 18 16 18Q28 20 28 40Q28 62 16 62Q4 58 4 42zM26 12Q32 0 46 6L52 20L58 30L68 54H44L36 34z" /></clipPath>
        <g clipPath="url(#patch)" shapeRendering="crispEdges">
          <path d="M0 0h72v72H0z" fill="#e0e0e2" />
          <path d="M26 0h12v24H26z" fill="#efefe8" />
          <path d="M38 18h20v12H38z" fill="#eef0f5" />
          <path d="M4 30h12v12H4zM16 42h12v12H16z" fill="#cfcfd0" />
          <path d="M38 30h12v24H38z" fill="#cacbce" />
          <path d="M4 54h12v10H4z" fill="#d4d4d6" />
        </g>
      </Overlay>
      <Overlay $x={576} $y={508} width="214" height="134" viewBox="0 0 214 134">
        <path d="M2 2L20 3L17 9L60 33L212 133L208 132L48 38L14 14L10 18z" fill="#ff2012" />
      </Overlay>
      <Mosaic />
    </Desktop>
  );
}

export default App;
